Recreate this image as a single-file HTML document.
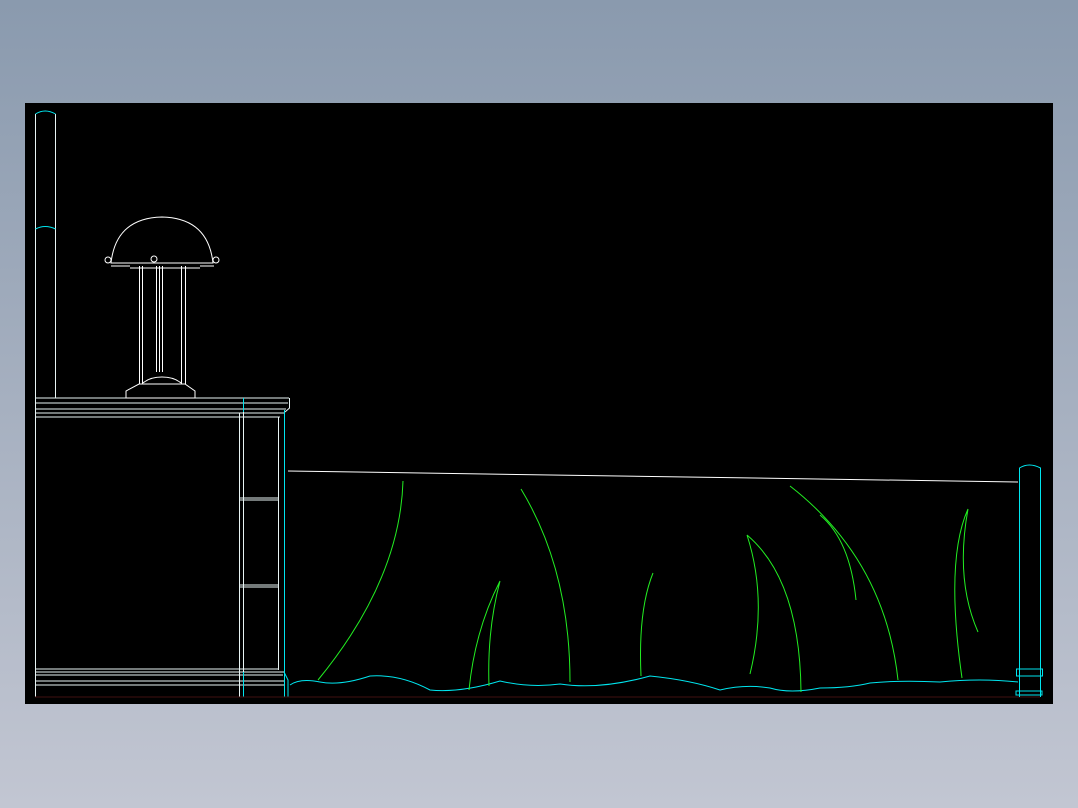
<!DOCTYPE html>
<html><head><style>
html,body{margin:0;padding:0;width:1078px;height:808px;overflow:hidden;background:linear-gradient(#8a9aae,#c2c6d2);}
svg{position:absolute;left:0;top:0}
</style></head><body>
<svg width="1078" height="808" viewBox="0 0 1078 808" fill="none" stroke-width="1">
<rect x="25" y="103" width="1028" height="601" fill="#000"/>
<g stroke="#e8f4f4">
<path d="M35.5 398V114M55.5 114V398"/>
<path d="M35.5 398H289M35.5 398V697M243.5 398V697M289.5 398V408L285 412"/>
<path d="M239.5 413V697"/>
<path d="M35.5 672H284"/>
<path d="M35.5 403H288M35.5 409H286M35.5 413H285M35.5 417H280"/>
<path d="M278.5 417V670M239.5 498H278M239.5 500H278M239.5 585H278M239.5 587H278"/>
<path d="M35.5 669H278M35.5 675H283M35.5 681H285M35.5 685H285"/>
</g>
<g stroke="#00e5ee">
<path d="M35.5 114Q45 108 55.5 114"/>
<path d="M35.5 229Q45 224 55.5 229"/>
<path d="M284.5 410V697M284 672L288 680V697M243.5 398V412M243.5 672V697"/>
</g>
<path d="M35 697H1040" stroke="#401010"/>
<!-- lamp -->
<g stroke="#fff">
<path d="M111 263Q116 218 162 217Q208 218 213 263Z"/>
<path d="M111 266H130M130 268H200M200 266H214"/>
<circle cx="108" cy="260" r="3"/><circle cx="216" cy="260" r="3"/><circle cx="154" cy="259" r="3"/>
<path d="M139.5 266V384M142.5 266V384M156.5 266V372M159.5 266V372M162.5 266V372M181.5 266V384M185.5 266V384"/>
<path d="M143 383Q150 377 162 377Q174 377 181 383M139 384H185L195 391V398H126V391Z"/>
</g>
<path d="M288 471L1018 482" stroke="#fff"/>
<g stroke="#00e5ee">
<path d="M1019.5 697V468Q1029 462 1040.5 468V697"/>
<path d="M1016.5 669H1042.5V676H1016.5ZM1016 691H1042V695H1016Z"/>
<path d="M290 685Q300 678 320 682Q340 686 370 676Q400 674 430 690Q460 693 500 681Q530 688 560 684Q600 690 650 676Q690 680 720 690Q745 684 770 688Q790 694 820 688Q850 688 870 683Q900 680 940 682Q980 678 1018 682"/>
</g>
<g stroke="#22ee22">
<path d="M403 481Q400 580 318 680"/>
<path d="M521 489Q570 570 570 682"/>
<path d="M500 581Q475 630 469 690M500 581Q487 630 489 686"/>
<path d="M653 573Q638 610 641 676"/>
<path d="M747 535Q800 580 801 692M747 535Q768 600 750 674"/>
<path d="M790 486Q885 560 898 680M820 515Q850 540 856 600"/>
<path d="M968 509Q945 560 962 678M968 509Q955 580 978 632"/>
</g>
</svg>
</body></html>
